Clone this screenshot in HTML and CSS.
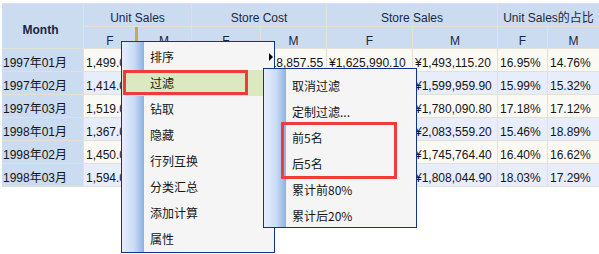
FILE: index.html
```html
<!DOCTYPE html>
<html>
<head>
<meta charset="utf-8">
<link rel="stylesheet" href="styles.css">
</head>
<body>
<div class="page">
  <div class="grid">
    <div class="h month">Month</div>
    <div class="h span2">Unit Sales</div>
    <div class="h span2">Store Cost</div>
    <div class="h span2">Store Sales</div>
    <div class="h span2">Unit Sales的占比</div>
    <div class="h">F</div><div class="h guide">M</div>
    <div class="h">F</div><div class="h">M</div>
    <div class="h">F</div><div class="h">M</div>
    <div class="h">F</div><div class="h">M</div>

    <div class="m">1997年01月</div><div class="c r1">1,499.00</div><div class="c r1">1,389.00</div><div class="c r1">¥3,212.43</div><div class="c r1">¥18,857.55</div><div class="c r1">¥1,625,990.10</div><div class="c r1">¥1,493,115.20</div><div class="c r1">16.95%</div><div class="c r1">14.76%</div>
    <div class="m">1997年02月</div><div class="c r2">1,414.00</div><div class="c r2">1,402.00</div><div class="c r2">¥3,050.12</div><div class="c r2">¥19,210.40</div><div class="c r2">¥1,652,310.30</div><div class="c r2">¥1,599,959.90</div><div class="c r2">15.99%</div><div class="c r2">15.32%</div>
    <div class="m">1997年03月</div><div class="c r1">1,519.00</div><div class="c r1">1,488.00</div><div class="c r1">¥3,301.77</div><div class="c r1">¥20,118.20</div><div class="c r1">¥1,712,404.60</div><div class="c r1">¥1,780,090.80</div><div class="c r1">17.18%</div><div class="c r1">17.12%</div>
    <div class="m">1998年01月</div><div class="c r2">1,367.00</div><div class="c r2">1,642.00</div><div class="c r2">¥2,980.55</div><div class="c r2">¥21,004.65</div><div class="c r2">¥1,598,220.70</div><div class="c r2">¥2,083,559.20</div><div class="c r2">15.46%</div><div class="c r2">18.89%</div>
    <div class="m">1998年02月</div><div class="c r1">1,450.00</div><div class="c r1">1,470.00</div><div class="c r1">¥3,122.90</div><div class="c r1">¥19,877.10</div><div class="c r1">¥1,690,015.50</div><div class="c r1">¥1,745,764.40</div><div class="c r1">16.40%</div><div class="c r1">16.62%</div>
    <div class="m">1998年03月</div><div class="c r2">1,594.00</div><div class="c r2">1,529.00</div><div class="c r2">¥3,410.06</div><div class="c r2">¥20,540.35</div><div class="c r2">¥1,802,117.80</div><div class="c r2">¥1,808,044.90</div><div class="c r2">18.03%</div><div class="c r2">17.29%</div>
  </div>

  <div class="menu main-menu">
    <div class="item">排序<span class="arrow"></span></div>
    <div class="item active">过滤</div>
    <div class="item">钻取</div>
    <div class="item">隐藏</div>
    <div class="item">行列互换</div>
    <div class="item">分类汇总</div>
    <div class="item">添加计算</div>
    <div class="item">属性</div>
  </div>

  <div class="menu sub-menu">
    <div class="item">取消过滤</div>
    <div class="item">定制过滤...</div>
    <div class="item">前5名</div>
    <div class="item">后5名</div>
    <div class="item">累计前80%</div>
    <div class="item">累计后20%</div>
  </div>

  <div class="mark mark-filter"></div>
  <div class="mark mark-top"></div>
</div>
</body>
</html>
```

FILE: styles.css
```css
html, body {
  margin: 0;
  padding: 0;
  overflow: hidden;
  background: #ffffff;
}

.page {
  position: relative;
  width: 599px;
  height: 254px;
  overflow: hidden;
  font-family: "Liberation Sans", "Noto Sans CJK SC", sans-serif;
  font-size: 12px;
  color: #141414;
}

.grid {
  display: grid;
  grid-template-columns: 81px 52px 54px 68px 65px 85px 84px 49px 51px;
  grid-template-rows: 22px 21px repeat(6, 22px);
  gap: 1px;
  background: #e3e0d7;
  padding: 1px 0 1px 0;
  margin: 3px 0 0 2px;
  width: 597px;
}

.grid > div {
  padding: 7px 2px 0 2px;
  line-height: 15px;
  white-space: nowrap;
  overflow: hidden;
}

.h {
  background: #ccdcf0;
  color: #1a2740;
  text-align: center;
}

.h.month {
  grid-row: span 2;
  font-weight: bold;
  padding-top: 19px;
  padding-right: 6px;
}

.span2 {
  grid-column: span 2;
}

.h.guide {
  position: relative;
  overflow: visible;
}

.h.guide::before {
  content: "";
  position: absolute;
  left: -2px;
  top: 0;
  bottom: 0;
  width: 3px;
  background: #c8a955;
}

.m {
  background: #ccdcf0;
  padding-left: 1px !important;
}

.c.r1 {
  background: #fbf9f3;
}

.c.r2 {
  background: #e7edfb;
}

.menu {
  position: absolute;
  background: #f5f5f5;
  border: 1px solid #12338e;
  font-family: "Noto Sans CJK SC", "Liberation Sans", sans-serif;
  font-size: 12px;
  color: #151515;
}

.menu::before {
  content: "";
  position: absolute;
  left: 0;
  top: 0;
  bottom: 0;
  width: 22px;
  background: linear-gradient(to right, #e6eefb 0%, #cbdcf5 55%, #8fb0e4 100%);
}

.main-menu {
  left: 121px;
  top: 41px;
  width: 152px;
  height: 208px;
  padding-top: 2px;
}

.sub-menu {
  left: 263px;
  top: 68px;
  width: 152px;
  height: 154px;
  padding-top: 4px;
  z-index: 2;
}

.item {
  position: relative;
  height: 26px;
  line-height: 26px;
  padding-left: 28px;
  white-space: nowrap;
}

.item.active {
  background: #dbe9c0;
}

.arrow {
  position: absolute;
  left: 147px;
  top: 9px;
  width: 0;
  height: 0;
  border-left: 4px solid #000;
  border-top: 4px solid transparent;
  border-bottom: 4px solid transparent;
}

.mark {
  position: absolute;
  border: 3px solid #f03b3b;
  box-sizing: border-box;
  z-index: 3;
}

.mark-filter {
  left: 123px;
  top: 70px;
  width: 125px;
  height: 25px;
}

.mark-top {
  left: 281px;
  top: 122px;
  width: 116px;
  height: 57px;
}
```
